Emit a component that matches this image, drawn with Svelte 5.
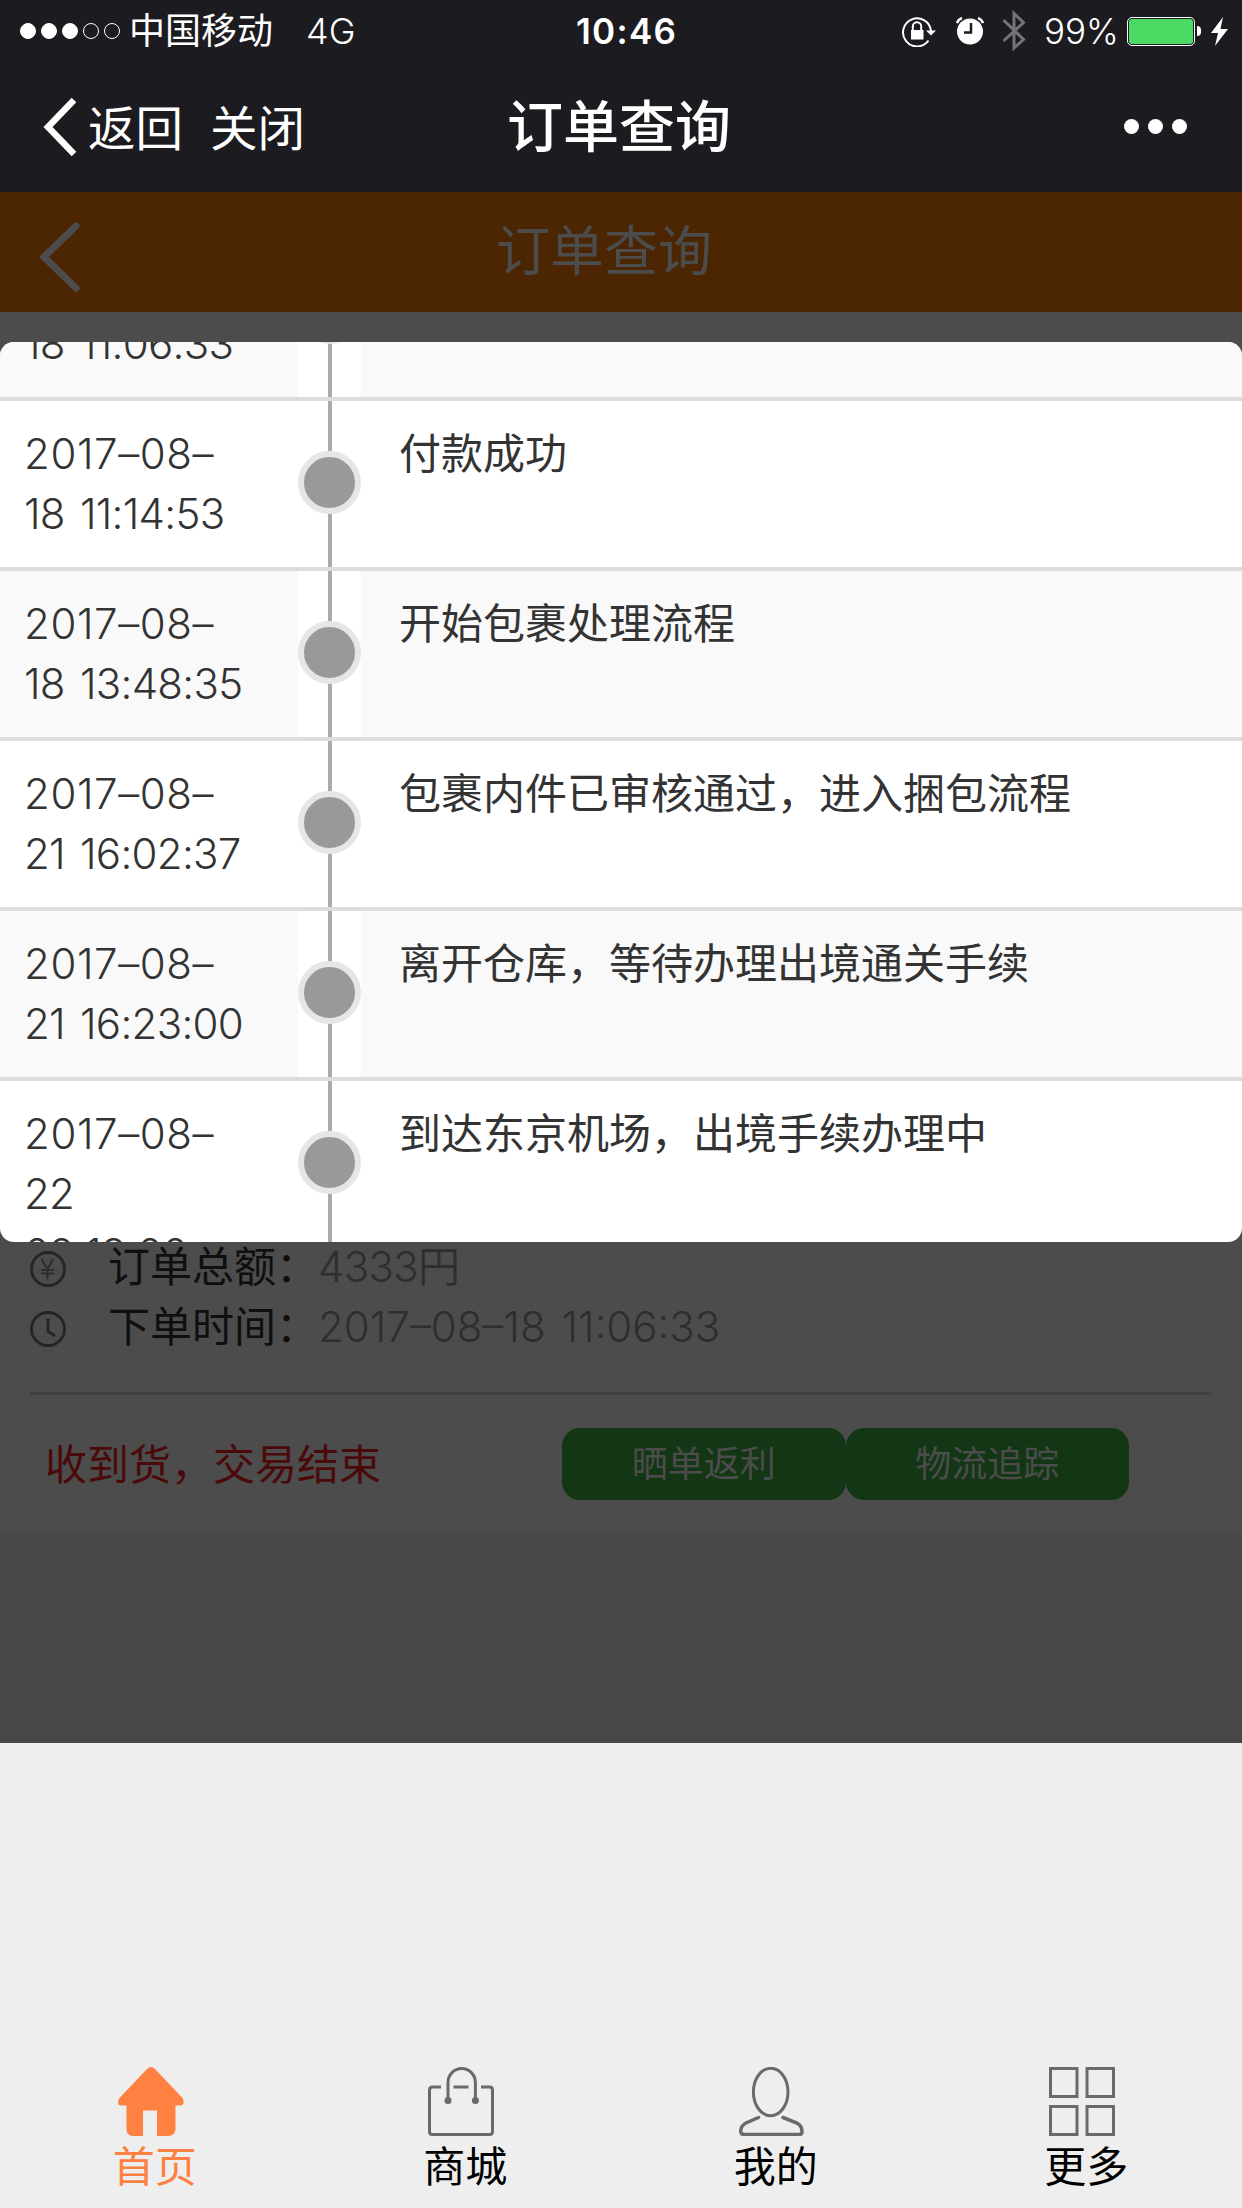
<script>
  // Order query page with the logistics tracking sheet open over it.

  const SIGNAL = [true, true, true, false, false];

  let steps = $state([
    { time: ["2017–08–", "18 11:06:33"], text: "" },
    { time: ["2017–08–", "18 11:14:53"], text: "付款成功" },
    { time: ["2017–08–", "18 13:48:35"], text: "开始包裹处理流程" },
    { time: ["2017–08–", "21 16:02:37"], text: "包裹内件已审核通过，进入捆包流程" },
    { time: ["2017–08–", "21 16:23:00"], text: "离开仓库，等待办理出境通关手续" },
    { time: ["2017–08–", "22", "09:18:00"], text: "到达东京机场，出境手续办理中" },
  ]);

  const TABS = [
    { id: "home", label: "首页" },
    { id: "mall", label: "商城" },
    { id: "mine", label: "我的" },
    { id: "more", label: "更多" },
  ];

  let active = $state("home");
</script>

<div class="screen">
  <div class="status">
    <div class="status-left">
      <div class="signal">
        {#each SIGNAL as on}<i class:on></i>{/each}
      </div>
      <span class="carrier">中国移动</span>
      <span class="net">4G</span>
    </div>
    <div class="clock">10:46</div>
    <div class="status-right">
      <svg width="34" height="31" viewBox="0 0 34 31" fill="none" stroke="#fff" stroke-width="2">
        <path d="M26.500 24.500A14 14 0 1 1 29 15" />
        <path d="M24 14.500h10l-5 5z" fill="#fff" stroke="none" />
        <path d="M10.800 15v-4.500a4.200 4.200 0 0 1 8.400 0v4.500" />
        <path d="M9 14h12.500v9.500h-12.500z" fill="#fff" stroke="none" />
      </svg>
      <svg class="ic-alarm" width="28" height="28" viewBox="0 0 28 28">
        <circle cx="14" cy="14.500" r="13" fill="#fff" />
        <path d="M1 6a8 8 0 0 1 5-5M27 6a8 8 0 0 0-5-5" stroke="#fff" stroke-width="2.500" fill="none" />
        <path d="M15 6v9.500H8" stroke="#1c1b20" stroke-width="2.500" fill="none" />
      </svg>
      <svg class="ic-bt" width="24" height="42" viewBox="0 0 24 42" fill="none" stroke="#747478" stroke-width="3">
        <path d="M1.500 10 21.500 29.500 12 38V3.500L21.500 12.500 1.500 31" />
      </svg>
      <span class="pct">99%</span>
      <div class="battery"><b></b></div>
      <i class="nub"></i>
      <svg width="17" height="29" viewBox="0 0 17 29" fill="#fff"><path d="M12 0 0 16h7L4 29 17 12H9.500z" /></svg>
    </div>
  </div>

  <div class="nav">
    <div class="nav-left">
      <svg width="34" height="60" viewBox="0 0 34 60" fill="none" stroke="#fff" stroke-width="6.500"><path d="M31 3 5 30l26 27" /></svg>
      <span>返回</span>
      <span class="close">关闭</span>
    </div>
    <div class="nav-title">订单查询</div>
    <div class="dots"><i></i><i></i><i></i></div>
  </div>

  <div class="page">
    <div class="page-head">
      <svg width="42" height="72" viewBox="0 0 42 72" fill="none" stroke="#4c4c4c" stroke-width="7" stroke-linecap="round"><path d="M37 5 5 36l32 31" /></svg>
      <div class="page-title">订单查询</div>
    </div>

    <div class="order">
      <div class="sheet">
        {#each steps as step}
          <div class="step">
            <div class="time">
              {#each step.time as line}<div>{line}</div>{/each}
            </div>
            <div class="rail"><i></i></div>
            <div class="what">{step.text}</div>
          </div>
        {/each}
      </div>

      <div class="lines">
        <div class="line">
          <svg width="36" height="36" viewBox="0 0 36 36" fill="none" stroke="#242424" stroke-width="2.800">
            <circle cx="18" cy="18" r="16.500" />
            <path d="M11.500 8l5.800 10.500L23 8M17.300 18v10.500M11 19h13M11 22.500h13" stroke="#2c2c2c" stroke-width="2" />
          </svg>
          <span class="label">订单总额：</span><span class="value">4333円</span>
        </div>
        <div class="line">
          <svg width="36" height="36" viewBox="0 0 36 36" fill="none" stroke="#242424" stroke-width="2.800">
            <circle cx="18" cy="18" r="16.500" />
            <path d="M18 7.500v13l7 4.500" />
          </svg>
          <span class="label">下单时间：</span><span class="value date">2017–08–18 11:06:33</span>
        </div>
      </div>

      <div class="foot">
        <div class="state">收到货，交易结束</div>
        <div class="btns">
          <button>晒单返利</button>
          <button>物流追踪</button>
        </div>
      </div>
    </div>
  </div>

  <div class="tabs">
    {#each TABS as tab}
      <button class="tab" class:active={active === tab.id} onclick={() => { active = tab.id; }}>
        <svg width="66" height="69" viewBox="0 0 66 69" fill="none" stroke="#6a6a6a" stroke-width="3">
          {#if tab.id === "home"}
            <path fill="#ff8142" stroke="none" d="M29 2Q33-2 37 2L65 31.500Q67 38.500 62 38.500H57.500V62Q57 69 50 69H39V43.500H25V69H15Q8.500 69 8.500 62V38.500H3Q-1.500 38 1 31.500z" />
          {:else if tab.id === "mall"}
            <path d="M13 20H4.500Q1.500 20 1.500 23V64.500Q1.500 67.500 4.500 67.500H61.500Q64.500 67.500 64.500 64.500V23Q64.500 20 61.500 20H53M25.500 20H40.500" />
            <path d="M20 33V15.500a13.700 14 0 0 1 27.400 0V33" />
            <circle cx="20" cy="33.500" r="3.500" fill="#6a6a6a" stroke="none" /><circle cx="47.400" cy="33.500" r="3.500" fill="#6a6a6a" stroke="none" />
          {:else if tab.id === "mine"}
            <ellipse cx="31.700" cy="25" rx="17.300" ry="23.700" />
            <path d="M19.500 50.500 7 56Q1.500 59 1.700 64.500 2 67.500 5 67.500H60Q63 67.500 63 64.500 63 59 58 56L44 50.500" stroke-width="3.500" stroke-linecap="round" />
          {:else}
            <rect x="1.500" y="1.500" width="26.500" height="28" /><rect x="38" y="1.500" width="26.500" height="28" />
            <rect x="1.500" y="39.500" width="26.500" height="28" /><rect x="38" y="39.500" width="26.500" height="28" />
          {/if}
        </svg>
        <span>{tab.label}</span>
      </button>
    {/each}
  </div>
</div>

<style>
  :global(body) { margin: 0; background: #eee; }
  .screen {
    width: 1242px; height: 2208px; overflow: hidden; display: flex; flex-direction: column;
    background: #eee; font-family: Inter, "Noto Sans CJK SC", sans-serif; font-weight: 400; line-height: 60px;
  }
  button { border: 0; padding: 0; font: inherit; background: none; cursor: pointer; }
  svg { display: block; flex: none; }

  .status { height: 62px; display: grid; grid-template-columns: 1fr 90px 1fr; align-items: center; background: #1c1b20; color: #fff; font-size: 36px; }
  .status-left { display: flex; align-items: center; padding-left: 20px; }
  .signal { display: flex; gap: 5px; margin-right: 9px; }
  .signal i { width: 16px; height: 16px; box-sizing: border-box; border: 1.500px solid #fff; border-radius: 50%; }
  .signal .on { background: #fff; }
  .net { margin-left: 33px; font-size: 36px; font-weight: 350; }
  .clock { font-size: 35px; font-weight: 600; letter-spacing: 1.300px; white-space: nowrap; }
  .status-right { display: flex; align-items: center; justify-content: flex-end; padding-right: 14px; }
  .ic-alarm { margin-left: 20px; }
  .ic-bt { margin-left: 18px; }
  .pct { width: 73px; margin: 0 10px 0 18px; font-size: 35px; font-weight: 350; }
  .battery { width: 68px; height: 29px; box-sizing: border-box; border: 1.500px solid #fff; border-radius: 5px; padding: 1px; }
  .battery b { display: block; height: 100%; border-radius: 3px; background: #4cd964; }
  .nub { width: 4px; height: 10px; margin: 0 10px 0 2px; border-radius: 0 4px 4px 0; background: #fff; }

  .nav { height: 130px; display: grid; grid-template-columns: 1fr 228px 1fr; align-items: center; background: #1c1b20; color: #fff; font-size: 47.500px; }
  .nav-left { display: flex; align-items: center; padding-left: 43px; gap: 11px; }
  .nav-left span { padding-top: 3px; }
  .close { margin-left: 16px; }
  .nav-title { font-size: 56px; font-weight: 500; white-space: nowrap; }
  .dots { display: flex; justify-content: flex-end; gap: 9px; padding: 0 55px 1px 0; }
  .dots i { width: 15px; height: 15px; border-radius: 50%; background: #fff; }

  .page { height: 1551px; background: #474747; }
  .page-head { height: 120px; display: flex; align-items: center; padding-left: 39px; background: #4c2602; }
  .page-head svg { margin-top: 9px; }
  .page-title { margin-left: 415px; font-size: 54px; color: #4c4c4c; }

  .order { height: 1191px; padding-top: 30px; background: #4c4c4c; }
  .sheet { height: 900px; overflow: hidden; border-radius: 14px; background: #fff; display: flex; flex-direction: column; }
  .step { flex: none; height: 166px; border-bottom: 4px solid #ddd; display: flex; color: #333; font-size: 42px; }
  /* scrolled: only the tail of the first entry is in view */
  .step:first-child { margin-top: -111px; }
  .step:nth-child(odd) { background: #f9f9f9; }
  .step:last-child { height: 226px; }
  .time { width: 274px; padding: 23px 0 0 24px; white-space: nowrap; font-weight: 350; letter-spacing: -0.700px; word-spacing: 4px; }
  .time div:first-child { letter-spacing: 0.600px; }
  .rail {
    width: 63px; padding-top: 50px; box-sizing: border-box;
    background: linear-gradient(#aaa, #aaa) center / 4px 100% no-repeat #fff;
  }
  .rail i { display: block; width: 51px; height: 51px; border: 6px solid #e6e6e6; border-radius: 50%; background: #999; }
  .what { flex: 1; padding: 23px 0 0 38px; white-space: nowrap; }

  .lines { height: 150px; box-sizing: border-box; margin-top: -5px; margin-bottom: 5px; }
  .line { height: 60px; display: flex; align-items: center; padding-left: 30px; font-size: 42px; }
  .line svg { margin: 4px 42px 0 0; }
  .label { width: 210px; color: #0f0f0f; white-space: nowrap; }
  .value { color: #2e2e2e; font-weight: 350; letter-spacing: -0.700px; }
  .date { letter-spacing: 0; word-spacing: 4px; }

  .foot { margin: 0 30px; border-top: 3px solid #414141; display: flex; align-items: center; height: 138px; }
  .state { width: 532px; padding-top: 2px; text-indent: 15px; font-size: 42px; color: #4b0a0a; }
  .btns { display: flex; }
  .btns button { width: 283.500px; height: 72px; border-radius: 18px; background: #133615; color: #4c4c4c; font-size: 36px; }

  .tabs { margin-top: auto; height: 141px; display: flex; color: #000; }
  .tab { flex: 1; display: flex; flex-direction: column; align-items: center; font-size: 42px; color: #000; }
  .tab svg { margin-right: 9px; }
  .tab span { margin: 1px 1px 0 0; }
  .tab.active { color: #ff8142; }
</style>
